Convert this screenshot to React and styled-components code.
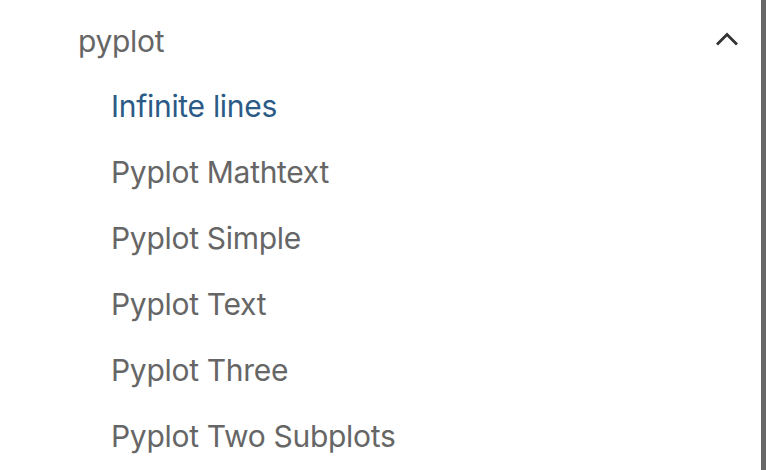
import React from "react";
import styled, { createGlobalStyle } from "styled-components";

const Global = createGlobalStyle`
  html, body { margin: 0; padding: 0; background: #ffffff; }
  body { font-family: Inter, "Liberation Sans", Arial, sans-serif; }
`;

const Page = styled.div`
  display: flex;
  width: 766px;
  height: 470px;
  overflow: hidden;
  background: #ffffff;
`;

const Nav = styled.nav`
  flex: 1;
  padding-top: 8px;
  padding-left: 78px;
  padding-right: 23px;
  letter-spacing: -0.3px;
`;

const SectionHeader = styled.div`
  display: flex;
  align-items: center;
  justify-content: space-between;
  height: 65px;
  font-size: 30px;
  color: #666666;
`;

const Chevron = styled.svg`
  width: 24px;
  height: 14px;
  margin-top: -3px;
  margin-right: -1px;
`;

const List = styled.ul`
  list-style: none;
  margin: 0;
  padding: 0 0 0 33px;
`;

const Item = styled.li`
  height: 66px;
  line-height: 66px;
  font-size: 30px;
  white-space: nowrap;
  color: ${(p) => (p.$active ? "#2b5a86" : "#666666")};
`;

const Scrollbar = styled.div`
  width: 5px;
  background: #686868;
`;

const items = [
  "Infinite lines",
  "Pyplot Mathtext",
  "Pyplot Simple",
  "Pyplot Text",
  "Pyplot Three",
  "Pyplot Two Subplots",
];

export default function App() {
  return (
    <Page>
      <Global />
      <Nav>
        <SectionHeader>
          <span>pyplot</span>
          <Chevron viewBox="0 0 24 14" fill="none">
            <path d="M2 12.5 L12 2.5 L22 12.5" stroke="#333333" strokeWidth="2.8" strokeLinecap="butt" strokeLinejoin="miter" />
          </Chevron>
        </SectionHeader>
        <List>
          {items.map((t, i) => (
            <Item key={t} $active={i === 0}>{t}</Item>
          ))}
        </List>
      </Nav>
      <Scrollbar />
    </Page>
  );
}
